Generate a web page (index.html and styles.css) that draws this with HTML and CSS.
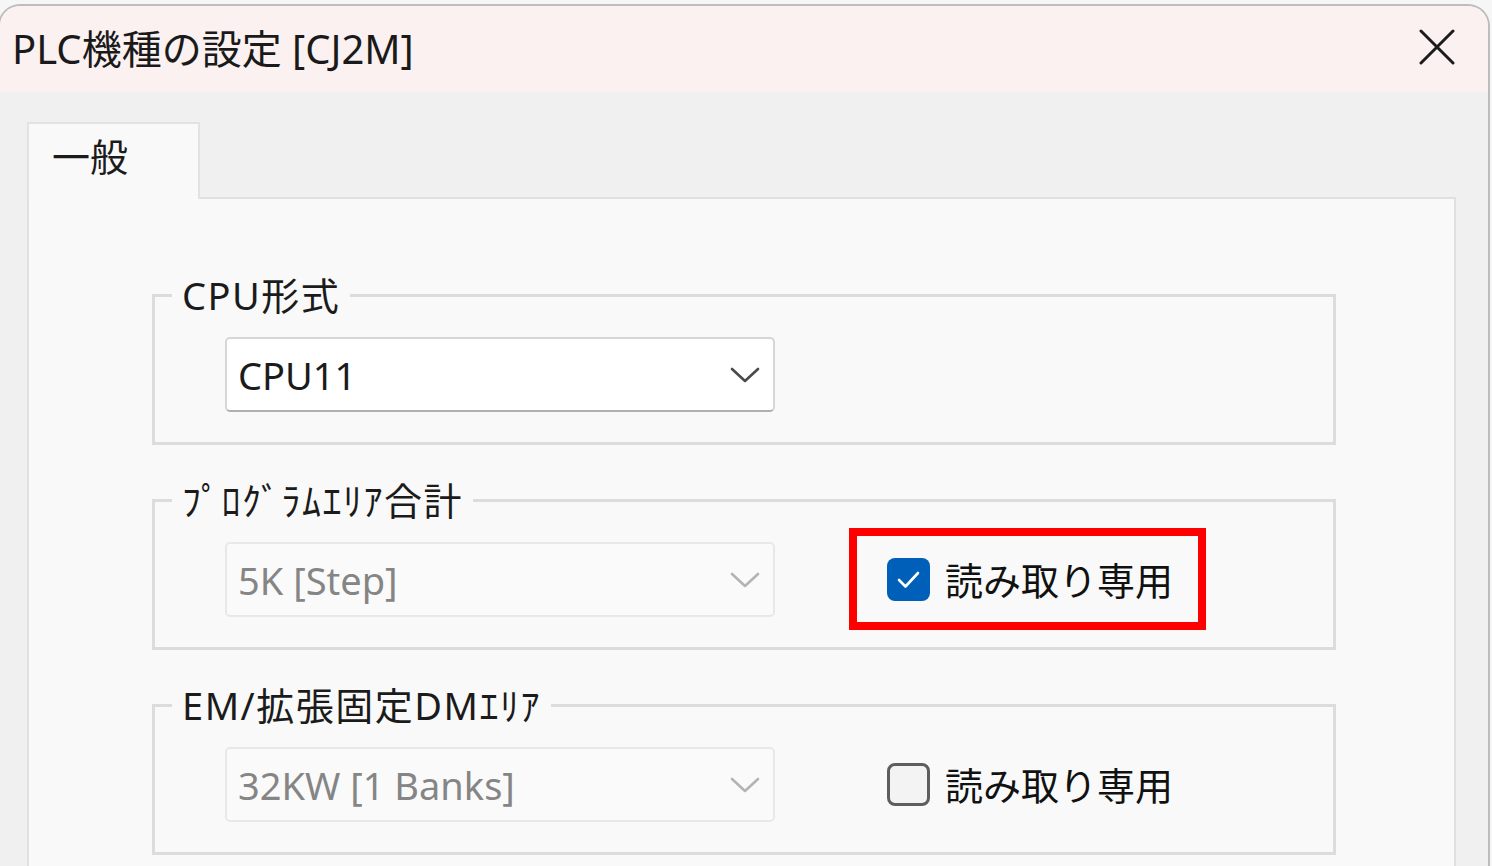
FILE: index.html
```html
<!DOCTYPE html>
<html lang="ja">
<head>
<meta charset="utf-8">
<title>PLC機種の設定 [CJ2M]</title>
<link rel="stylesheet" href="styles.css">
</head>
<body>
<div class="window">
  <div class="titlebar">
    <span class="title">PLC機種の設定 [CJ2M]</span>
    <span class="close">
      <svg width="36" height="36" viewBox="0 0 36 36"><path d="M2 2 L34 34 M34 2 L2 34" stroke="#1c1c1c" stroke-width="3" stroke-linecap="round" fill="none"/></svg>
    </span>
  </div>
  <div class="client">
    <div class="tabs"><div class="tab">一般</div></div>
    <div class="panel">
      <fieldset class="group">
        <legend>CPU形式</legend>
        <div class="row">
          <div class="combo">
            <span class="value">CPU11</span>
            <svg class="chev" width="30" height="16" viewBox="0 0 30 16"><polyline points="2,2 15,14 28,2" fill="none" stroke="#4a4a4a" stroke-width="2.6" stroke-linecap="round" stroke-linejoin="round"/></svg>
          </div>
        </div>
      </fieldset>
      <fieldset class="group">
        <legend>ﾌﾟﾛｸﾞﾗﾑｴﾘｱ合計</legend>
        <div class="row">
          <div class="combo disabled">
            <span class="value">5K [Step]</span>
            <svg class="chev" width="30" height="16" viewBox="0 0 30 16"><polyline points="2,2 15,14 28,2" fill="none" stroke="#b4b4b4" stroke-width="2.6" stroke-linecap="round" stroke-linejoin="round"/></svg>
          </div>
          <label class="check">
            <span class="box checked">
              <svg width="43" height="43" viewBox="0 0 43 43"><polyline points="12,22 18.5,28.5 31,15" fill="none" stroke="#ffffff" stroke-width="2.6" stroke-linecap="round" stroke-linejoin="round"/></svg>
            </span>
            <span class="label">読み取り専用</span>
            <span class="redmark"></span>
          </label>
        </div>
      </fieldset>
      <fieldset class="group">
        <legend>EM/拡張固定DMｴﾘｱ</legend>
        <div class="row">
          <div class="combo disabled">
            <span class="value">32KW [1 Banks]</span>
            <svg class="chev" width="30" height="16" viewBox="0 0 30 16"><polyline points="2,2 15,14 28,2" fill="none" stroke="#b4b4b4" stroke-width="2.6" stroke-linecap="round" stroke-linejoin="round"/></svg>
          </div>
          <label class="check">
            <span class="box"></span>
            <span class="label">読み取り専用</span>
          </label>
        </div>
      </fieldset>
    </div>
  </div>
</div>
</body>
</html>
```
FILE: styles.css
```css
html, body {
  margin: 0;
  height: 100%;
  overflow: hidden;
}
body {
  background: #f6f6f6;
  font-family: "Noto Sans", "Noto Sans CJK JP", sans-serif;
  color: #1b1b1b;
}
.window {
  box-sizing: border-box;
  margin: 4px 0 0 -2px;
  width: 1492px;
  height: 920px;
  border: 2px solid #bdbdbd;
  border-bottom: none;
  border-radius: 22px 22px 0 0;
  background: #f0f0f0;
  overflow: hidden;
}
.titlebar {
  height: 86px;
  background: #fbf1f1;
  display: flex;
  align-items: center;
  justify-content: space-between;
  padding-left: 12px;
  padding-right: 33px;
}
.title {
  font-size: 40px;
  line-height: 50px;
  color: #1a1a1a;
  white-space: nowrap;
}
.close {
  display: flex;
  width: 36px;
  height: 36px;
  margin-top: -4px;
}
.client {
  padding: 30px 32px 0 27px;
}
.tabs {
  display: flex;
}
.tab {
  position: relative;
  z-index: 1;
  box-sizing: border-box;
  width: 173px;
  height: 77px;
  margin-bottom: -2px;
  background: #f9f9f9;
  border: 2px solid #e2e2e2;
  border-bottom: none;
  padding-left: 23px;
  font-size: 38px;
  line-height: 64px;
}
.panel {
  height: 800px;
  background: #f9f9f9;
  border: 2px solid #e0e0e0;
  padding: 73px 0 0 123px;
}
.group {
  box-sizing: border-box;
  width: 1184px;
  margin: 0 0 32px 0;
  padding: 0;
  border: 3px solid #dcdcdc;
}
.group legend {
  margin-left: 17px;
  padding: 0 10px;
  font-size: 38px;
  line-height: 46px;
  letter-spacing: 1.5px;
  color: #1b1b1b;
}
.row {
  display: flex;
  align-items: center;
  padding: 19px 0 30px 70px;
}
.combo {
  box-sizing: border-box;
  width: 550px;
  height: 75px;
  background: #ffffff;
  border: 2px solid #d6d6d6;
  border-bottom-color: #b0b0b0;
  border-radius: 5px;
  display: flex;
  align-items: center;
  justify-content: space-between;
  padding: 0 13px 0 11px;
}
.combo .value {
  font-size: 38px;
  line-height: 46px;
  color: #1b1b1b;
}
.combo.disabled {
  background: #fafafa;
  border-color: #e8e8e8;
}
.combo.disabled .value {
  color: #858585;
}
.check {
  position: relative;
  display: flex;
  align-items: center;
  gap: 15px;
  margin-left: 112px;
}
.box {
  box-sizing: border-box;
  width: 43px;
  height: 43px;
  border-radius: 8px;
  border: 3px solid #5e5e5e;
  background: #f3f3f3;
  display: flex;
}
.box.checked {
  border: none;
  background: #005fb8;
}
.label {
  font-size: 38px;
  line-height: 46px;
  color: #111111;
}
.redmark {
  position: absolute;
  top: -29px;
  bottom: -27px;
  left: -38px;
  right: -33px;
  border: 8px solid #ff0000;
  pointer-events: none;
}
```
